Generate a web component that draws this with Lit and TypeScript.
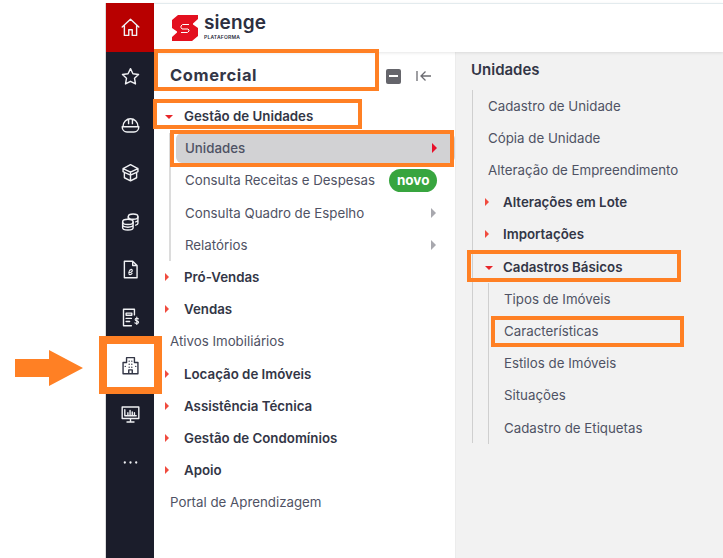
import { LitElement, css, html, nothing, svg } from 'lit';
import { customElement } from 'lit/decorators.js';

type Row = { label: string; kind: 'head' | 'open' | 'leaf' };

const leftTail: Row[] = [
  { label: 'Pró-Vendas', kind: 'head' },
  { label: 'Vendas', kind: 'head' },
  { label: 'Ativos Imobiliários', kind: 'leaf' },
  { label: 'Locação de Imóveis', kind: 'head' },
  { label: 'Assistência Técnica', kind: 'head' },
  { label: 'Gestão de Condomínios', kind: 'head' },
  { label: 'Apoio', kind: 'head' },
  { label: 'Portal de Aprendizagem', kind: 'leaf' },
];

const railIcons = [
  // star
  svg`<path d="M12 3l2.800 5.800 6.400.9-4.600 4.400 1.100 6.400L12 17.500l-5.700 3 1.100-6.400L2.800 9.700l6.400-.9z"/>`,
  // helmet
  svg`<path d="M3.500 14a8.500 8.500 0 0 1 17 0M2.500 14.500h19M2.500 14.500c0 3.500 2.500 6 5.500 6h8c3 0 5.500-2.500 5.500-6M9.800 6v5M14.200 6v5"/>`,
  // box
  svg`<path d="M3.500 7.500L12 3l8.500 4.500v3.500l-1.500.8V18l-7 3.500L5 18v-6.200L3.500 11zM3.500 7.500L12 11.500l8.500-4M12 11.500v10M5 11.800l7 3.200 7-3.200"/>`,
  // coins
  svg`<ellipse cx="15" cy="6.500" rx="5.500" ry="3"/><path d="M9.500 6.500v3M20.500 6.500v7.500c0 1-1 1.800-2.500 2.200M20.500 10.200c0 1-1 1.800-2.500 2.200"/><ellipse cx="9" cy="12.500" rx="6" ry="3"/><path d="M3 12.500v6.500c0 1.500 2.700 2.700 6 2.700s6-1.200 6-2.700v-6.500M3 15.800c0 1.500 2.700 2.700 6 2.700s6-1.200 6-2.700"/>`,
  // e-document
  svg`<path d="M5 2.500h9.500L19.500 7.500v14H5zM14.500 2.500v5h5"/><path d="M10 15.500c2 0 4-1 4-2.500 0-1-1-1.300-1.700-.9-1.500.8-2.500 3.300-2 5 .4 1.200 2.200 1 3.500-.6" stroke-width="1.300"/>`,
  // invoice with dollar
  svg`<path d="M16.500 9V2.500H4v19h9M7 7h6.500v2.500H7zM7 13h6M7 16.500h4"/><path d="M21 13.500c-.6-.8-3.700-1.200-3.700.7 0 2 3.900 1.300 3.900 3.300 0 1.900-3.300 1.600-4.200.7M19.200 11.500v8.500" stroke-width="1.300"/>`,
];

@customElement('app-root')
export class AppRoot extends LitElement {
  static styles = css`
    :host {
      display: block;
      width: 723px;
      height: 558px;
      background: #fff;
      font-family: Inter, "Liberation Sans", sans-serif;
      color: #4f5264;
      font-size: 13.300px;
    }
    .stage {
      position: relative;
      display: flex;
      height: 558px;
      padding-left: 106px;
      overflow: hidden;
    }
    .rail {
      width: 48px;
      flex: none;
      margin-top: 3px;
      background: #1b1d2b;
      box-shadow: -1px 0 0 #dcdcdc;
      display: flex;
      flex-direction: column;
    }
    .rail-btn {
      height: 48.300px;
      flex: none;
      display: flex;
      align-items: center;
      justify-content: center;
      color: #f0f1f4;
    }
    .rail-btn.home {
      height: 49px;
      background: #b80000;
    }
    .rail-btn.active {
      background: #fff;
      color: #333646;
    }
    .rail svg {
      width: 21px;
      height: 21px;
      fill: none;
      stroke: currentColor;
      stroke-width: 1.600;
      stroke-linejoin: round;
      stroke-linecap: round;
    }
    .main {
      flex: 1;
      min-width: 0;
      display: flex;
      flex-direction: column;
    }
    .topbar {
      height: 49px;
      margin-top: 3px;
      flex: none;
      display: flex;
      align-items: center;
      gap: 6px;
      padding-left: 18px;
      box-shadow: 0 1px 3px rgba(0, 0, 0, 0.1);
      border-top: 1px solid #e3ebee;
      box-sizing: border-box;
      position: relative;
    }
    .brand {
      display: flex;
      flex-direction: column;
      margin-bottom: 5px;
      color: #2c2f40;
    }
    .brand b {
      font-size: 19px;
      line-height: 22px;
      font-weight: 600;
      letter-spacing: 0.1px;
    }
    .brand small {
      font-size: 5px;
      line-height: 6px;
      font-weight: 600;
      letter-spacing: 0.2px;
    }
    .panels {
      flex: 1;
      display: flex;
      min-height: 0;
    }
    .left {
      width: 302px;
      flex: none;
      box-sizing: border-box;
      padding-left: 7px;
      border-right: 1px solid #ececec;
    }
    .title {
      height: 48px;
      box-sizing: border-box;
      display: flex;
      align-items: center;
      padding: 0 9px 3px;
      font-size: 16.500px;
      font-weight: 700;
      color: #333646;
      letter-spacing: 0.6px;
    }
    .title span {
      flex: 1;
    }
    .title-actions {
      display: flex;
      align-items: center;
      gap: 15px;
      margin-right: 14px;
      margin-top: 3px;
      color: #6c6c72;
    }
    .minus {
      width: 15px;
      height: 15px;
      border-radius: 2px;
      background: #65656b;
      display: flex;
      align-items: center;
      justify-content: center;
    }
    .minus::before {
      content: '';
      width: 9px;
      height: 2px;
      background: #fff;
    }
    .right {
      flex: 1;
      background: #f2f2f2;
      padding-left: 15px;
    }
    .right h2 {
      margin: 0;
      height: 37.600px;
      line-height: 36px;
      font-size: 15px;
      font-weight: 600;
      color: #333646;
    }
    .row {
      height: 32.200px;
      display: flex;
      align-items: center;
      box-sizing: border-box;
      white-space: nowrap;
    }
    .row.head {
      font-weight: 600;
      color: #333646;
    }
    .tri {
      flex: none;
      display: flex;
    }
    .tri::before {
      content: '';
      width: 0;
      height: 0;
      border-style: solid;
      border-color: transparent transparent transparent #f04b3e;
      border-width: 4px 0 4px 4px;
    }
    .open .tri::before {
      margin-top: 2px;
      border-color: #e8262a transparent transparent transparent;
      border-width: 4px 4px 0 4px;
    }
    .group {
      border-left: 2px solid #dcdcdc;
    }
    .left .top .row {
      padding-left: 9px;
    }
    .left .top .tri {
      width: 19px;
      margin-left: -5px;
    }
    .left .sub {
      margin-left: 8px;
    }
    .left .sub .row {
      padding: 0 19px 0 14px;
      justify-content: space-between;
    }
    .left .sub .row.selected {
      height: 30px;
      margin: 1px 0 1.200px 5px;
      padding-left: 9px;
      padding-right: 18px;
      background: #d2d2d4;
      border-radius: 6px;
      font-weight: 500;
    }
    .caret {
      width: 0;
      height: 0;
      border-style: solid;
      border-color: transparent transparent transparent #a8a8ae;
      border-width: 5px 0 5px 5px;
    }
    .selected .caret {
      border-left-color: #e8102a;
    }
    .novo {
      background: #38a53f;
      color: #fff;
      font-weight: 700;
      font-size: 13.500px;
      line-height: 23px;
      padding: 0 7.500px;
      border-radius: 12px;
      margin-right: -1px;
    }
    .right .lvl1 {
      margin-left: 1px;
      border-left: 1px solid #cfcfcf;
      padding-left: 15px;
      height: 353px;
    }
    .right .head {
      margin-left: -3px;
    }
    .right .tri {
      width: 18px;
    }
    .right .lvl2 {
      border-left: 1px solid #cfcfcf;
      padding-left: 15px;
    }
    .mark {
      position: absolute;
      box-sizing: border-box;
      border: 4px solid #ff8024;
      pointer-events: none;
    }
    .arrow {
      position: absolute;
      left: 15px;
      top: 350px;
      width: 68px;
      height: 36px;
      fill: #ff8024;
    }
  `;

  renderRow(r: Row) {
    return html`<div class="row ${r.kind === 'leaf' ? '' : 'head'} ${r.kind === 'open' ? 'open' : ''}">
      ${r.kind === 'leaf' ? nothing : html`<i class="tri"></i>`}${r.label}
    </div>`;
  }

  renderLogo() {
    return html`<svg width="26" height="26" viewBox="0 0 26 26">
      <path fill="#e3101f" d="M6 0H26V4L21 8.500V9.500L26 13V21L20 26H0V22L5 17.500V16.500L0 13V5Z"/>
      <path fill="none" stroke="#fff" stroke-width="1" d="M17 9.500H10.500L9 11v1.500L10 14H16l1 1v1l-1.500 1.500H9"/>
    </svg>`;
  }

  render() {
    return html`<div class="stage">
      <nav class="rail">
        <div class="rail-btn home">
          <svg viewBox="0 0 24 24"><path d="M2.500 11.500L12 2.500l9.500 9M5 9.500V21h5v-6.500h4V21h5V9.500"/></svg>
        </div>
        ${railIcons.map((i) => html`<div class="rail-btn"><svg viewBox="0 0 24 24">${i}</svg></div>`)}
        <div class="rail-btn active">
          <svg viewBox="0 0 24 24"><path d="M3.500 21.500V8.500h4V3h9v5.500h4v13zM10 21.500v-4.500h4v4.500M10.500 7h.01M13.500 7h.01M10.500 10.500h.01M13.500 10.500h.01M10.500 14h.01M13.500 14h.01M6 13h.01M18 13h.01"/></svg>
        </div>
        <div class="rail-btn">
          <svg viewBox="0 0 24 24"><path d="M2.500 3.500h19v13h-19zM12 16.500v4M8 20.500h8M5.500 6.500v7h13M9 13v-3M11.500 13V7.500M14 13V9M16.500 13v-3"/></svg>
        </div>
        <div class="rail-btn">
          <svg viewBox="0 0 24 24"><path stroke-width="2.600" d="M5.500 12h.01M12 12h.01M18.500 12h.01"/></svg>
        </div>
      </nav>
      <div class="main">
        <header class="topbar">${this.renderLogo()}
          <div class="brand"><b>sienge</b><small>PLATAFORMA</small></div>
        </header>
        <div class="panels">
          <section class="left">
            <div class="title">
              <span>Comercial</span>
              <div class="title-actions">
                <i class="minus"></i>
                <svg width="16" height="12" viewBox="0 0 16 12" fill="none" stroke="currentColor" stroke-width="1.300"><path d="M1 1v10M15 6H5M9.500 1.500L5 6l4.500 4.500"/></svg>
              </div>
            </div>
            <div class="top">
              ${this.renderRow({ label: 'Gestão de Unidades', kind: 'open' })}
              <div class="sub group">
                <div class="row selected">Unidades<i class="caret"></i></div>
                <div class="row">Consulta Receitas e Despesas<span class="novo">novo</span></div>
                <div class="row">Consulta Quadro de Espelho<i class="caret"></i></div>
                <div class="row">Relatórios<i class="caret"></i></div>
              </div>
              ${leftTail.map((r) => this.renderRow(r))}
            </div>
          </section>
          <section class="right">
            <h2>Unidades</h2>
            <div class="lvl1">
              ${['Cadastro de Unidade', 'Cópia de Unidade', 'Alteração de Empreendimento'].map((l) => html`<div class="row">${l}</div>`)}
              ${this.renderRow({ label: 'Alterações em Lote', kind: 'head' })}
              ${this.renderRow({ label: 'Importações', kind: 'head' })}
              ${this.renderRow({ label: 'Cadastros Básicos', kind: 'open' })}
              <div class="lvl2">
                ${['Tipos de Imóveis', 'Características', 'Estilos de Imóveis', 'Situações', 'Cadastro de Etiquetas'].map((l) => html`<div class="row">${l}</div>`)}
              </div>
            </div>
          </section>
        </div>
      </div>
      <svg class="arrow" viewBox="0 0 68 36"><path d="M0 9h34V0l34 18-34 18v-9H0z"/></svg>
      <div class="mark" style="left:99px;top:336px;width:63px;height:58px;border-width:8px 8px 7px 8px"></div>
      <div class="mark" style="left:154px;top:49px;width:225px;height:42px"></div>
      <div class="mark" style="left:153px;top:99px;width:209px;height:30px"></div>
      <div class="mark" style="left:170px;top:130px;width:284px;height:37px"></div>
      <div class="mark" style="left:467px;top:250px;width:214px;height:32px"></div>
      <div class="mark" style="left:491px;top:316px;width:193px;height:31px"></div>
    </div>`;
  }
}
